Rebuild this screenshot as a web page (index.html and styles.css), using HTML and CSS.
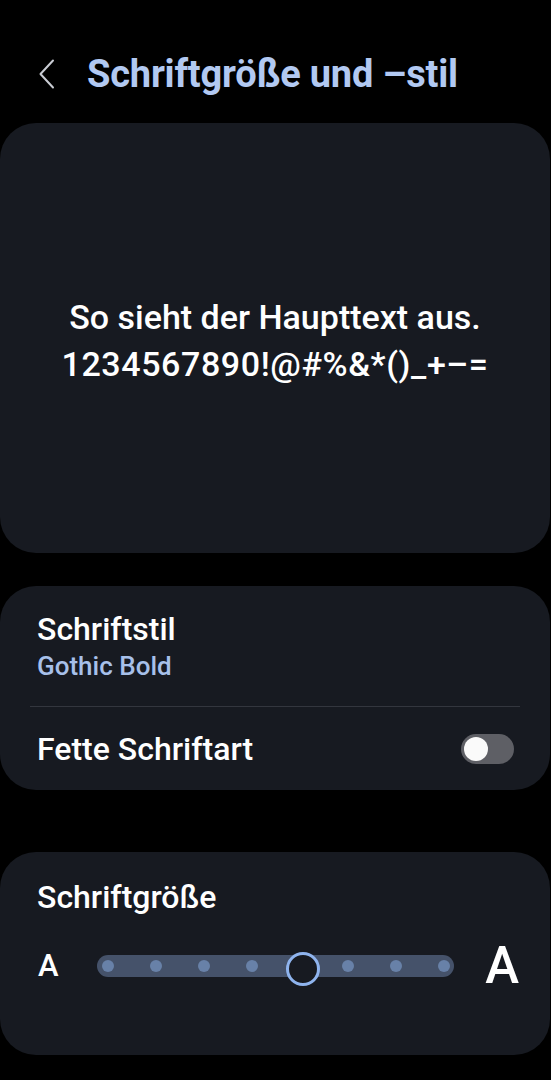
FILE: index.html
```html
<!DOCTYPE html>
<html>
    <head>
        <meta charset="utf-8">
        <title>Schriftgröße und –stil</title>
        <link rel="stylesheet" href="styles.css">
    </head>
    <body>
        <div class="header">
            <svg class="back" width="18" height="30" viewBox="0 0 18 30">
                <path d="M15 1.5 L2.5 15 L15 28.5" fill="none" stroke="#c9ccd3" stroke-width="2" stroke-linecap="round" stroke-linejoin="round"/>
            </svg>
            <h1 class="title">Schriftgröße und –stil</h1>
        </div>

        <div class="card preview">
            <p>So sieht der Haupttext aus.<br><span class="chars">1234567890!@#%&amp;*()_+–=</span></p>
        </div>

        <div class="card options">
            <div class="row style-row">
                <div class="label">Schriftstil</div>
                <div class="sub">Gothic Bold</div>
            </div>
            <div class="divider"></div>
            <div class="row bold-row">
                <div class="label">Fette Schriftart</div>
                <span class="switch"><span class="knob"></span></span>
            </div>
        </div>

        <div class="card size">
            <div class="label">Schriftgröße</div>
            <div class="size-row">
                <span class="a-small">A</span>
                <div class="track">
                    <span class="stop"></span>
                    <span class="stop"></span>
                    <span class="stop"></span>
                    <span class="stop"></span>
                    <span class="stop current"></span>
                    <span class="stop"></span>
                    <span class="stop"></span>
                    <span class="stop"></span>
                </div>
                <span class="a-big">A</span>
            </div>
        </div>
    </body>
</html>
```

FILE: styles.css
```css
* {
    margin: 0;
    padding: 0;
    box-sizing: border-box;
}
body {
    background: #000;
    color: #fff;
    font-family: Roboto, "Noto Sans", sans-serif;
    width: 551px;
}
.header {
    display: flex;
    align-items: center;
    height: 123px;
    padding: 25px 0 0 38px;
}
.back {
    flex: none;
}
.title {
    margin-left: 31px;
    font-size: 38px;
    font-weight: 700;
    color: #b2c9f2;
    letter-spacing: -0.2px;
}
.card {
    width: 550px;
    background: #171a21;
    border-radius: 36px;
}
.preview {
    height: 430px;
    display: flex;
    align-items: center;
    justify-content: center;
    text-align: center;
    padding-top: 6px;
}
.preview p {
    font-size: 34px;
    font-weight: 500;
    line-height: 47px;
}
.preview .chars {
    letter-spacing: 0.6px;
}
.options {
    margin-top: 33px;
    height: 204px;
    display: flex;
    flex-direction: column;
}
.row {
    padding: 0 36px 0 37px;
}
.style-row {
    height: 120px;
    padding-top: 24px;
}
.label {
    font-size: 32px;
    font-weight: 500;
    line-height: 38px;
}
.sub {
    margin-top: 2px;
    font-size: 26px;
    font-weight: 500;
    color: #a7c0ea;
    line-height: 32px;
}
.divider {
    height: 1px;
    margin: 0 30px;
    background: #33363e;
}
.bold-row {
    flex: 1;
    display: flex;
    align-items: center;
    justify-content: space-between;
}
.switch {
    display: flex;
    align-items: center;
    width: 53px;
    height: 30px;
    padding: 0 3px;
    border-radius: 15px;
    background: #5e5f65;
}
.knob {
    width: 24px;
    height: 24px;
    border-radius: 50%;
    background: #fafafa;
}
.size {
    margin-top: 62px;
    height: 203px;
    padding-top: 26px;
}
.size .label {
    padding-left: 37px;
}
.size-row {
    display: flex;
    align-items: center;
    margin-top: 22px;
    padding: 0 31px 0 38px;
}
.a-small {
    font-size: 31px;
    font-weight: 500;
    line-height: 40px;
}
.a-big {
    font-size: 51px;
    font-weight: 500;
    line-height: 56px;
}
.track {
    flex: 1;
    display: flex;
    align-items: center;
    justify-content: space-between;
    height: 22px;
    margin: 0 31px 0 38px;
    padding: 0 4px 0 5px;
    border-radius: 11px;
    background: #45526a;
}
.stop {
    width: 12px;
    height: 12px;
    border-radius: 50%;
    background: #6881a8;
}
.stop.current {
    position: relative;
    background: none;
}
.stop.current::after {
    content: "";
    position: absolute;
    left: -8px;
    top: -8px;
    width: 28px;
    height: 28px;
    border: 3px solid #8fb4ee;
    border-radius: 50%;
    background: #171a21;
}
```
